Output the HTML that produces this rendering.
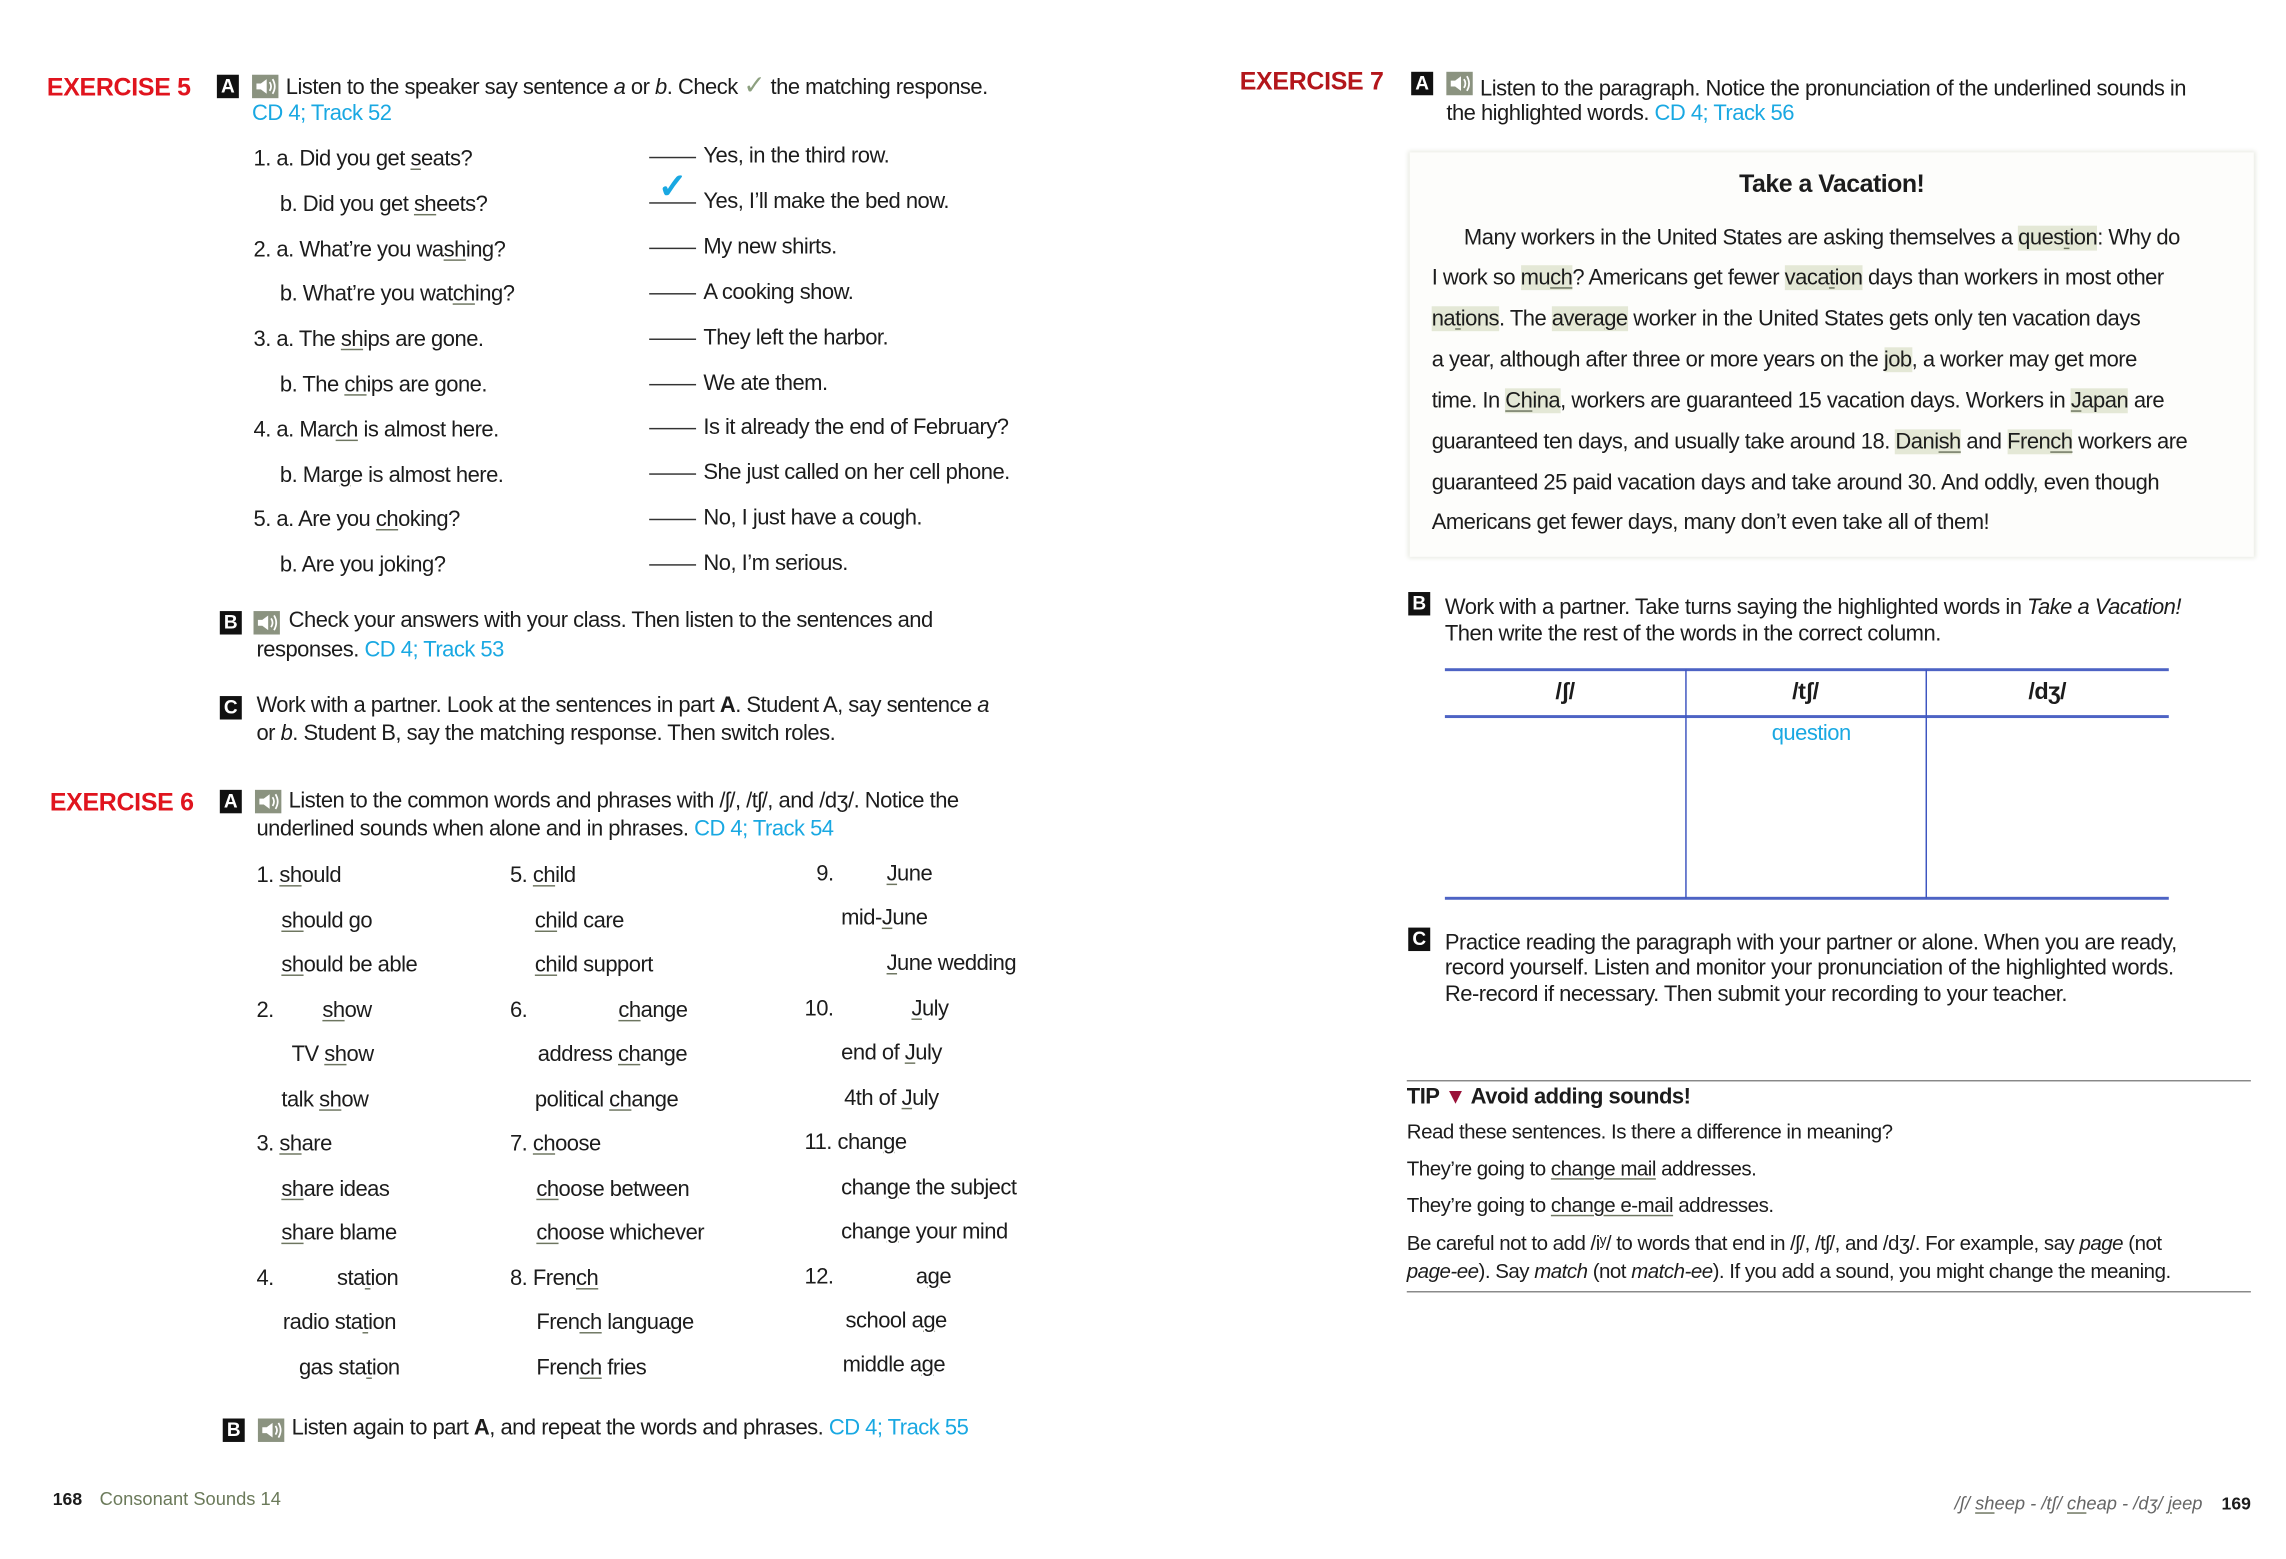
<!DOCTYPE html>
<html><head><meta charset="utf-8"><style>
html,body{margin:0;padding:0;background:#fff;}
body{width:2286px;height:1559px;overflow:hidden;position:relative;}
#p{position:absolute;left:0;top:0;width:1560px;height:1064px;transform:scale(1.4654);transform-origin:0 0;font-family:"Liberation Sans",sans-serif;color:#1c1c1c;font-size:15px;letter-spacing:-0.35px;}
.t{position:absolute;white-space:nowrap;line-height:20px;}
.ex{font-weight:bold;font-size:17px;letter-spacing:-0.2px;color:#e0141e;}
.bx{position:absolute;width:15px;height:16px;background:#111;color:#fff;font-weight:bold;font-size:13px;line-height:16px;text-align:center;letter-spacing:0;}
.sp{position:absolute;width:18px;height:16px;background:#8b9380;}
.bl{color:#19a8e2;}
u{text-decoration:underline;text-underline-offset:2px;text-decoration-color:#6d7560;}
.hl{background:#e4e8d6;}
.ln{position:absolute;height:0;}
.sm{font-size:14px;}
.bk{display:inline-block;width:32px;border-bottom:1px solid #333;margin-right:5px;vertical-align:3px;}
</style></head><body><div id="p">

<!-- EXERCISE 5 -->
<div class="t ex" style="left:32px;top:50px">EXERCISE 5</div>
<div class="bx" style="left:148px;top:51px">A</div>
<div class="sp" style="left:172px;top:51px"><svg width="18" height="16"><path d="M3 6h3l4-3v10l-4-3H3z" fill="#fff"/><path d="M12 5q2 3 0 6M14 3q3 5 0 10" stroke="#fff" fill="none" stroke-width="1.2"/></svg></div>
<div class="t" style="left:195px;top:48px">Listen to the speaker say sentence <i>a</i> or <i>b</i>. Check <span style="color:#8da080;font-size:18px">✓</span> the matching response.</div>
<div class="t bl" style="left:172px;top:68px">CD 4; Track 52</div>

<div class="t" style="left:173px;top:99px">1. a. Did you get <u>s</u>eats?</div>
<div class="t" style="left:191px;top:130px">b. Did you get <u>sh</u>eets?</div>
<div class="t" style="left:173px;top:161px">2. a. What’re you wa<u>sh</u>ing?</div>
<div class="t" style="left:191px;top:191px">b. What’re you wat<u>ch</u>ing?</div>
<div class="t" style="left:173px;top:222px">3. a. The <u>sh</u>ips are gone.</div>
<div class="t" style="left:191px;top:253px">b. The <u>ch</u>ips are gone.</div>
<div class="t" style="left:173px;top:284px">4. a. Mar<u>ch</u> is almost here.</div>
<div class="t" style="left:191px;top:315px">b. Mar<u>g</u>e is almost here.</div>
<div class="t" style="left:173px;top:345px">5. a. Are you <u>ch</u>oking?</div>
<div class="t" style="left:191px;top:376px">b. Are you <u>j</u>oking?</div>

<div class="t" style="left:443px;top:97px"><span class="bk"></span>Yes, in the third row.</div>
<div class="t" style="left:443px;top:128px"><span class="bk"></span>Yes, I’ll make the bed now.</div>
<div class="t bl" style="left:449px;top:118px;font-size:24px;font-weight:bold">✓</div>
<div class="t" style="left:443px;top:159px"><span class="bk"></span>My new shirts.</div>
<div class="t" style="left:443px;top:190px"><span class="bk"></span>A cooking show.</div>
<div class="t" style="left:443px;top:221px"><span class="bk"></span>They left the harbor.</div>
<div class="t" style="left:443px;top:252px"><span class="bk"></span>We ate them.</div>
<div class="t" style="left:443px;top:282px"><span class="bk"></span>Is it already the end of February?</div>
<div class="t" style="left:443px;top:313px"><span class="bk"></span>She just called on her cell phone.</div>
<div class="t" style="left:443px;top:344px"><span class="bk"></span>No, I just have a cough.</div>
<div class="t" style="left:443px;top:375px"><span class="bk"></span>No, I’m serious.</div>

<div class="bx" style="left:150px;top:417px">B</div>
<div class="sp" style="left:173px;top:417px"><svg width="18" height="16"><path d="M3 6h3l4-3v10l-4-3H3z" fill="#fff"/><path d="M12 5q2 3 0 6M14 3q3 5 0 10" stroke="#fff" fill="none" stroke-width="1.2"/></svg></div>
<div class="t" style="left:197px;top:414px">Check your answers with your class. Then listen to the sentences and</div>
<div class="t" style="left:175px;top:434px">responses. <span class="bl">CD 4; Track 53</span></div>

<div class="bx" style="left:150px;top:475px">C</div>
<div class="t" style="left:175px;top:472px">Work with a partner. Look at the sentences in part <b>A</b>. Student A, say sentence <i>a</i></div>
<div class="t" style="left:175px;top:491px">or <i>b</i>. Student B, say the matching response. Then switch roles.</div>

<!-- EXERCISE 6 -->
<div class="t ex" style="left:34px;top:538px">EXERCISE 6</div>
<div class="bx" style="left:150px;top:539px">A</div>
<div class="sp" style="left:174px;top:539px"><svg width="18" height="16"><path d="M3 6h3l4-3v10l-4-3H3z" fill="#fff"/><path d="M12 5q2 3 0 6M14 3q3 5 0 10" stroke="#fff" fill="none" stroke-width="1.2"/></svg></div>
<div class="t" style="left:197px;top:537px">Listen to the common words and phrases with /ʃ/, /tʃ/, and /dʒ/. Notice the</div>
<div class="t" style="left:175px;top:556px">underlined sounds when alone and in phrases. <span class="bl">CD 4; Track 54</span></div>

<div class="t" style="left:175px;top:588px">1. <u>sh</u>ould</div>
<div class="t" style="left:192px;top:619px"><u>sh</u>ould go</div>
<div class="t" style="left:192px;top:649px"><u>sh</u>ould be able</div>
<div class="t" style="left:175px;top:680px">2.</div><div class="t" style="left:220px;top:680px"><u>sh</u>ow</div>
<div class="t" style="left:199px;top:710px">TV <u>sh</u>ow</div>
<div class="t" style="left:192px;top:741px">talk <u>sh</u>ow</div>
<div class="t" style="left:175px;top:771px">3. <u>sh</u>are</div>
<div class="t" style="left:192px;top:802px"><u>sh</u>are ideas</div>
<div class="t" style="left:192px;top:832px"><u>sh</u>are blame</div>
<div class="t" style="left:175px;top:863px">4.</div><div class="t" style="left:230px;top:863px">sta<u>t</u>ion</div>
<div class="t" style="left:193px;top:893px">radio sta<u>t</u>ion</div>
<div class="t" style="left:204px;top:924px">gas sta<u>t</u>ion</div>

<div class="t" style="left:348px;top:588px">5. <u>ch</u>ild</div>
<div class="t" style="left:365px;top:619px"><u>ch</u>ild care</div>
<div class="t" style="left:365px;top:649px"><u>ch</u>ild support</div>
<div class="t" style="left:348px;top:680px">6.</div><div class="t" style="left:422px;top:680px"><u>ch</u>ange</div>
<div class="t" style="left:367px;top:710px">address <u>ch</u>ange</div>
<div class="t" style="left:365px;top:741px">political <u>ch</u>ange</div>
<div class="t" style="left:348px;top:771px">7. <u>ch</u>oose</div>
<div class="t" style="left:366px;top:802px"><u>ch</u>oose between</div>
<div class="t" style="left:366px;top:832px"><u>ch</u>oose whichever</div>
<div class="t" style="left:348px;top:863px">8. Fren<u>ch</u></div>
<div class="t" style="left:366px;top:893px">Fren<u>ch</u> language</div>
<div class="t" style="left:366px;top:924px">Fren<u>ch</u> fries</div>

<div class="t" style="left:557px;top:587px">9.</div><div class="t" style="left:605px;top:587px"><u>J</u>une</div>
<div class="t" style="left:574px;top:617px">mid-<u>J</u>une</div>
<div class="t" style="left:605px;top:648px"><u>J</u>une wedding</div>
<div class="t" style="left:549px;top:679px">10.</div><div class="t" style="left:622px;top:679px"><u>J</u>uly</div>
<div class="t" style="left:574px;top:709px">end of <u>J</u>uly</div>
<div class="t" style="left:576px;top:740px">4th of <u>J</u>uly</div>
<div class="t" style="left:549px;top:770px">11. chan<u>g</u>e</div>
<div class="t" style="left:574px;top:801px">chan<u>g</u>e the subject</div>
<div class="t" style="left:574px;top:831px">chan<u>g</u>e your mind</div>
<div class="t" style="left:549px;top:862px">12.</div><div class="t" style="left:625px;top:862px">a<u>g</u>e</div>
<div class="t" style="left:577px;top:892px">school a<u>g</u>e</div>
<div class="t" style="left:575px;top:922px">middle a<u>g</u>e</div>

<div class="bx" style="left:152px;top:968px">B</div>
<div class="sp" style="left:176px;top:968px"><svg width="18" height="16"><path d="M3 6h3l4-3v10l-4-3H3z" fill="#fff"/><path d="M12 5q2 3 0 6M14 3q3 5 0 10" stroke="#fff" fill="none" stroke-width="1.2"/></svg></div>
<div class="t" style="left:199px;top:965px">Listen again to part <b>A</b>, and repeat the words and phrases. <span class="bl">CD 4; Track 55</span></div>

<div class="t" style="left:36px;top:1013px;font-size:12px;font-weight:bold;letter-spacing:0">168</div>
<div class="t" style="left:68px;top:1013px;font-size:12.5px;color:#6b7a5a;letter-spacing:0">Consonant Sounds 14</div>

<!-- EXERCISE 7 -->
<div class="t ex" style="left:846px;top:46px;color:#b3161b">EXERCISE 7</div>
<div class="bx" style="left:963px;top:49px">A</div>
<div class="sp" style="left:987px;top:49px"><svg width="18" height="16"><path d="M3 6h3l4-3v10l-4-3H3z" fill="#fff"/><path d="M12 5q2 3 0 6M14 3q3 5 0 10" stroke="#fff" fill="none" stroke-width="1.2"/></svg></div>
<div class="t" style="left:1010px;top:51px">Listen to the paragraph. Notice the pronunciation of the underlined sounds in</div>
<div class="t" style="left:987px;top:68px">the highlighted words. <span class="bl">CD 4; Track 56</span></div>

<div style="position:absolute;left:962px;top:104px;width:576px;height:276px;background:#fdfdfb;box-shadow:0 0 3px 1px #e8eae2;"></div>
<div class="t" style="left:962px;width:576px;text-align:center;top:116px;font-weight:bold;font-size:17px">Take a Vacation!</div>
<div class="t" style="left:999px;top:153px">Many workers in the United States are asking themselves a <span class="hl">ques<u>t</u>ion</span>: Why do</div>
<div class="t" style="left:977px;top:180px">I work so <span class="hl">mu<u>ch</u></span>? Americans get fewer <span class="hl">vaca<u>t</u>ion</span> days than workers in most other</div>
<div class="t" style="left:977px;top:208px"><span class="hl">na<u>t</u>ions</span>. The <span class="hl">avera<u>g</u>e</span> worker in the United States gets only ten vacation days</div>
<div class="t" style="left:977px;top:236px">a year, although after three or more years on the <span class="hl"><u>j</u>ob</span>, a worker may get more</div>
<div class="t" style="left:977px;top:264px">time. In <span class="hl"><u>Ch</u>ina</span>, workers are guaranteed 15 vacation days. Workers in <span class="hl"><u>J</u>apan</span> are</div>
<div class="t" style="left:977px;top:292px">guaranteed ten days, and usually take around 18. <span class="hl">Dani<u>sh</u></span> and <span class="hl">Fren<u>ch</u></span> workers are</div>
<div class="t" style="left:977px;top:320px">guaranteed 25 paid vacation days and take around 30. And oddly, even though</div>
<div class="t" style="left:977px;top:347px">Americans get fewer days, many don’t even take all of them!</div>

<div class="bx" style="left:961px;top:404px">B</div>
<div class="t" style="left:986px;top:405px">Work with a partner. Take turns saying the highlighted words in <i>Take a Vacation!</i></div>
<div class="t" style="left:986px;top:423px">Then write the rest of the words in the correct column.</div>

<div class="ln" style="left:986px;top:456px;width:494px;border-top:2px solid #4d63c4"></div>
<div class="ln" style="left:986px;top:488px;width:494px;border-top:2px solid #4d63c4"></div>
<div class="ln" style="left:986px;top:612px;width:494px;border-top:2px solid #4d63c4"></div>
<div style="position:absolute;left:1150px;top:457px;width:0;height:156px;border-left:1px solid #3e55c0"></div>
<div style="position:absolute;left:1314px;top:457px;width:0;height:156px;border-left:1px solid #3e55c0"></div>
<div class="t" style="left:986px;width:164px;text-align:center;top:463px;font-weight:bold;font-size:16px">/ʃ/</div>
<div class="t" style="left:1150px;width:164px;text-align:center;top:463px;font-weight:bold;font-size:16px">/tʃ/</div>
<div class="t" style="left:1314px;width:166px;text-align:center;top:463px;font-weight:bold;font-size:16px">/dʒ/</div>
<div class="t bl" style="left:1150px;width:172px;text-align:center;top:491px">question</div>

<div class="bx" style="left:961px;top:633px">C</div>
<div class="t" style="left:986px;top:634px">Practice reading the paragraph with your partner or alone. When you are ready,</div>
<div class="t" style="left:986px;top:651px">record yourself. Listen and monitor your pronunciation of the highlighted words.</div>
<div class="t" style="left:986px;top:669px">Re-record if necessary. Then submit your recording to your teacher.</div>

<div class="ln" style="left:960px;top:737px;width:576px;border-top:1.5px solid #888"></div>
<div class="t" style="left:960px;top:739px;font-weight:bold;font-size:15px">TIP <span style="color:#9a1239">▼</span> Avoid adding sounds!</div>
<div class="t sm" style="left:960px;top:762px">Read these sentences. Is there a difference in meaning?</div>
<div class="t sm" style="left:960px;top:787px">They’re going to <u>change mail</u> addresses.</div>
<div class="t sm" style="left:960px;top:812px">They’re going to <u>change e-mail</u> addresses.</div>
<div class="t sm" style="left:960px;top:838px">Be careful not to add /iʸ/ to words that end in /ʃ/, /tʃ/, and /dʒ/. For example, say <i>page</i> (not</div>
<div class="t sm" style="left:960px;top:857px"><i>page-ee</i>). Say <i>match</i> (not <i>match-ee</i>). If you add a sound, you might change the meaning.</div>
<div class="ln" style="left:960px;top:881px;width:576px;border-top:1.5px solid #888"></div>

<div class="t" style="left:1300px;width:203px;text-align:right;top:1016px;font-size:12.5px;font-style:italic;color:#666;letter-spacing:0">/ʃ/ <u>sh</u>eep - /tʃ/ <u>ch</u>eap - /dʒ/ <u>j</u>eep</div>
<div class="t" style="left:1516px;top:1016px;font-size:12px;font-weight:bold;letter-spacing:0">169</div>

</div></body></html>
